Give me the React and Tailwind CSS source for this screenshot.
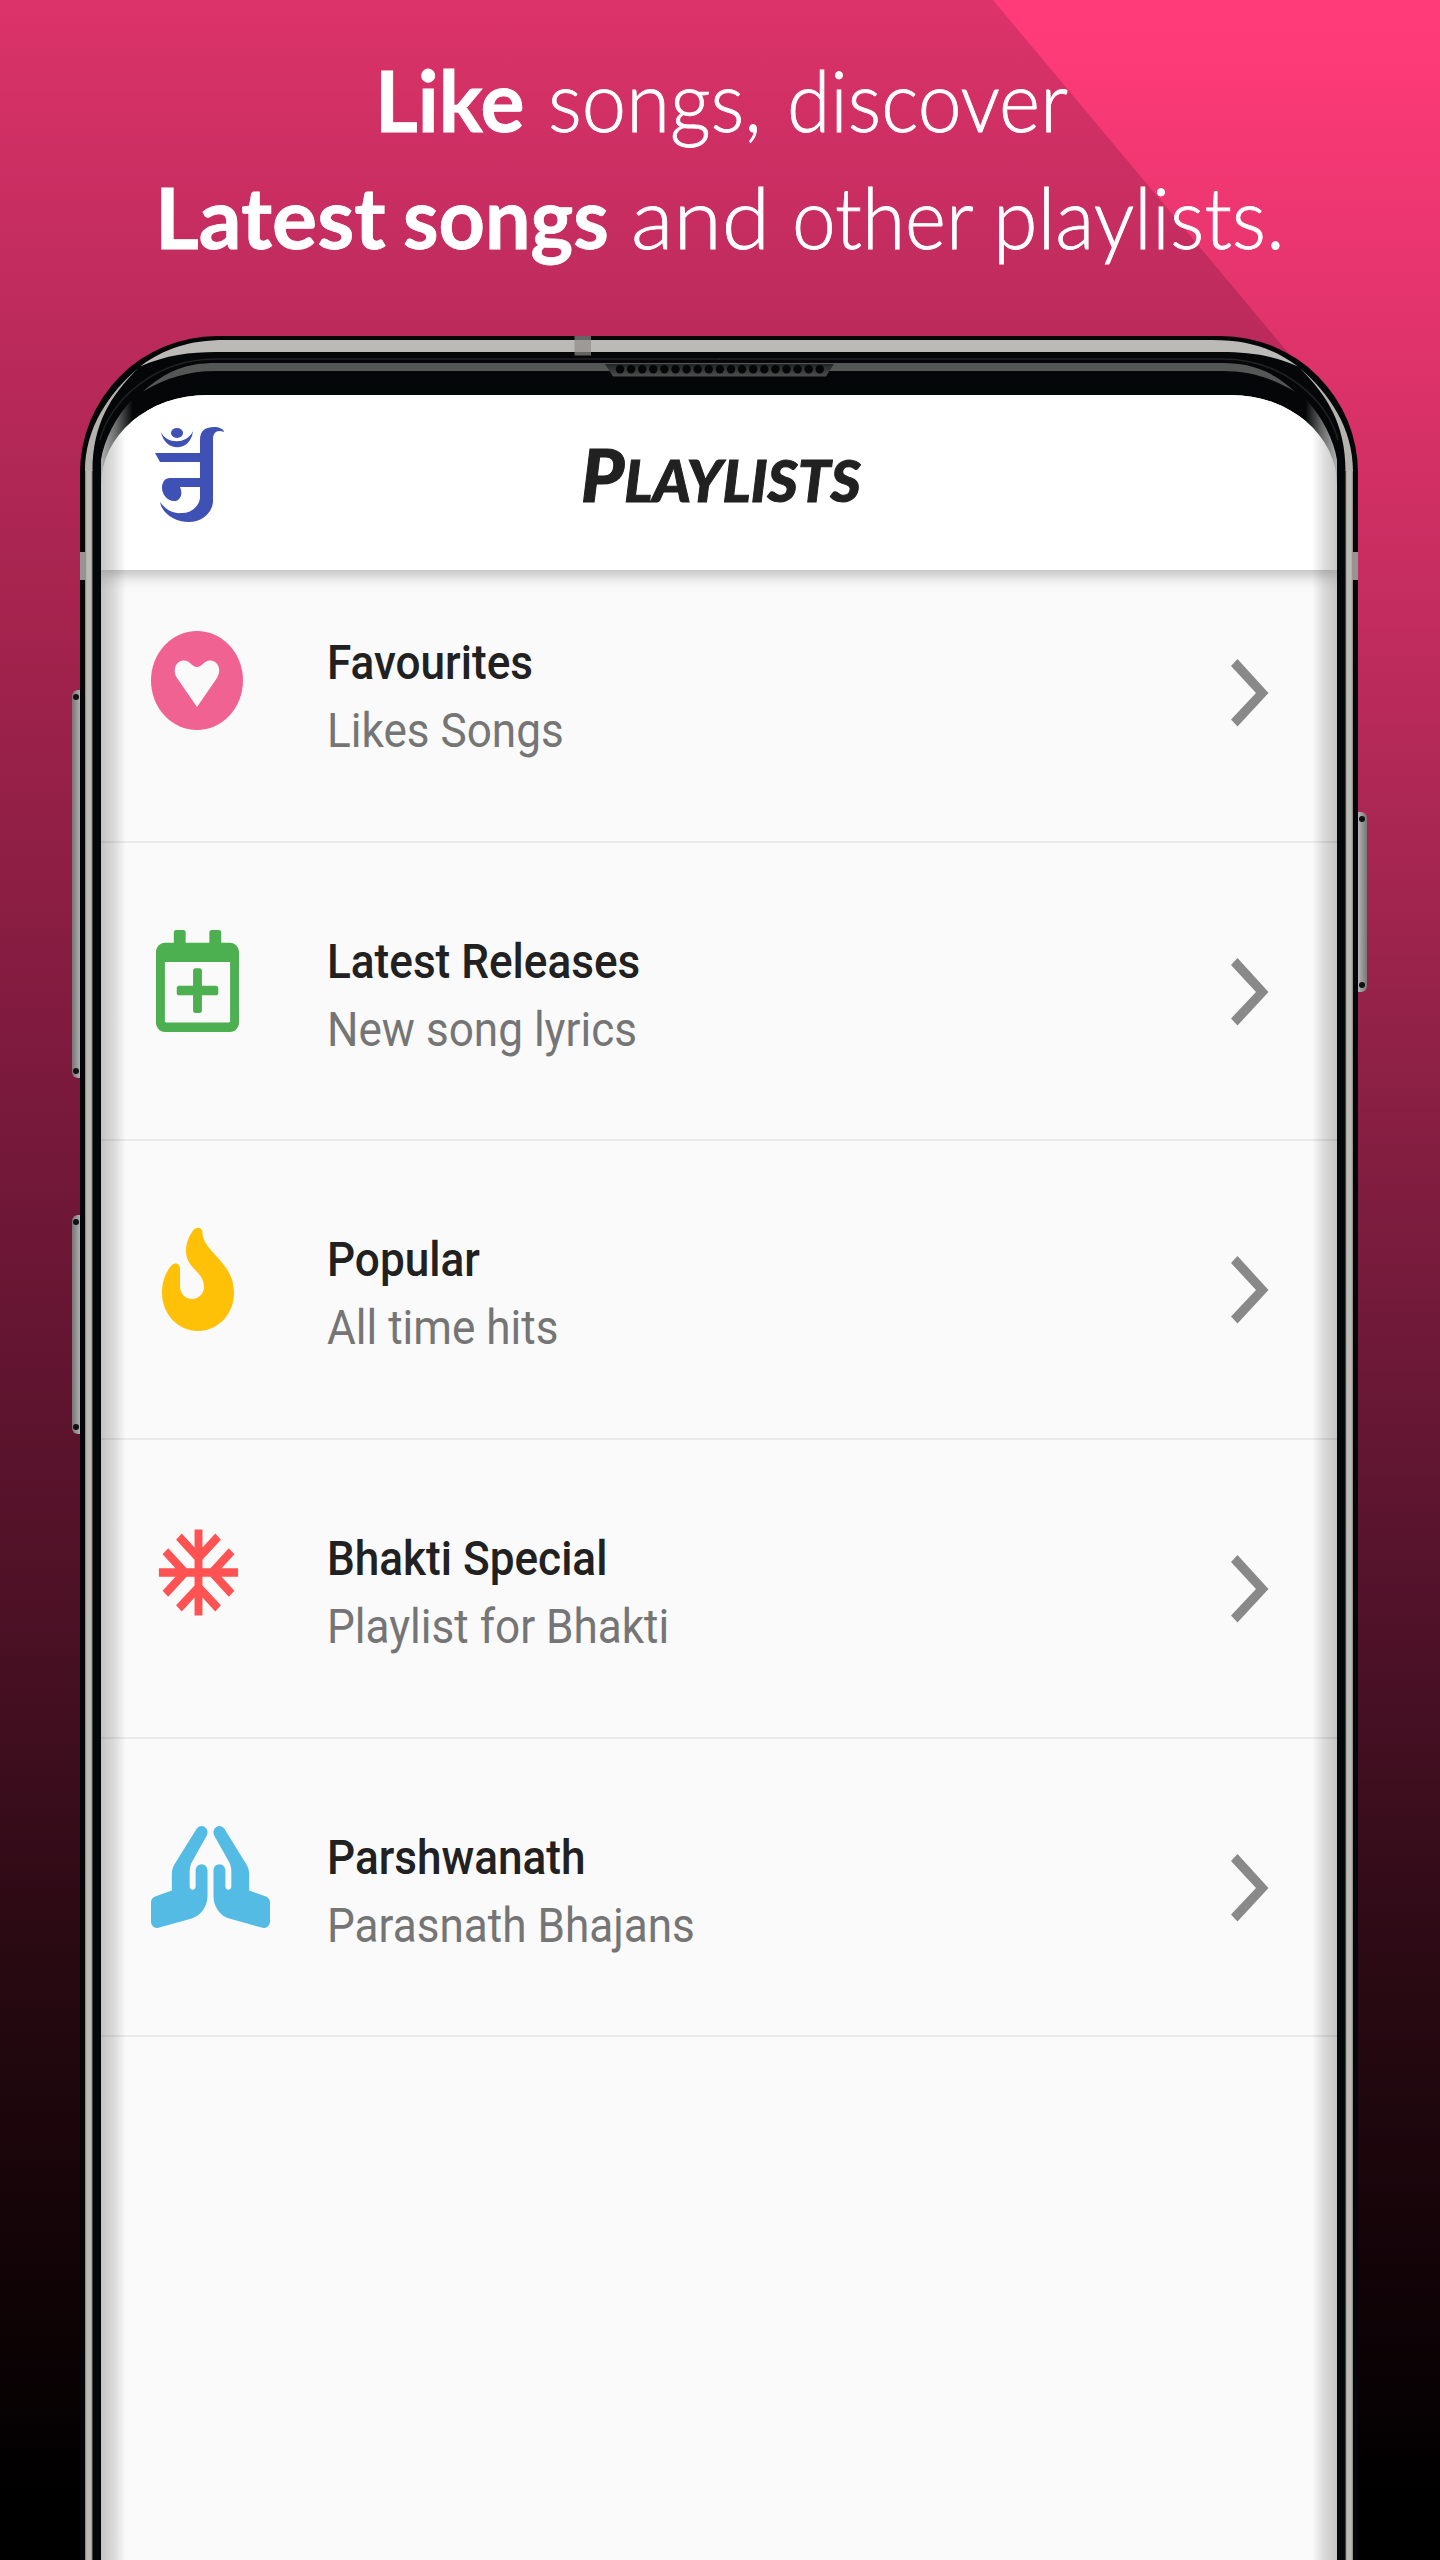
import React, { useLayoutEffect, useRef, useState } from "react";
import { FaPrayingHands, FaRegCalendarPlus } from "react-icons/fa";
import { MdAcUnit } from "react-icons/md";

// Stretches or squeezes its text so that it fills the given width.
function Fit({ width, className = "", children }) {
  const ref = useRef(null);
  const [scale, setScale] = useState(1);
  useLayoutEffect(() => {
    setScale(width / ref.current.offsetWidth);
  }, [width]);
  return (
    <span className="block shrink-0" style={{ width }}>
      <span
        ref={ref}
        className={"inline-block origin-left whitespace-nowrap " + className}
        style={{ transform: `scaleX(${scale})` }}
      >
        {children}
      </span>
    </span>
  );
}

function Headline() {
  return (
    <h1 className="relative flex h-[336px] flex-col pt-[41px] font-['Lato',sans-serif] text-[84px] leading-[117px] font-light text-white [-webkit-text-stroke:0.800px_white]">
      <span className="flex h-[117px] pl-[375px]">
        <Fit width={150} className="font-bold">Like</Fit>
        <span className="w-[23px]"> </span>
        <Fit width={214}>songs,</Fit>
        <span className="w-[25px]"> </span>
        <Fit width={281}>discover</Fit>
      </span>
      <span className="flex h-[117px] pl-[155px]">
        <Fit width={231} className="font-bold">Latest</Fit>
        <span className="w-[17px]"> </span>
        <Fit width={206} className="font-bold">songs</Fit>
        <span className="w-[22px]"> </span>
        <Fit width={139}>and</Fit>
        <span className="w-[22px]"> </span>
        <Fit width={182}>other</Fit>
        <span className="w-[19px]"> </span>
        <Fit width={292}>playlists.</Fit>
      </span>
    </h1>
  );
}

function LogoMark() {
  return (
    <svg className="h-[98px] w-[72px]" viewBox="0 0 72 98" fill="#3f51b5">
      <ellipse cx="23" cy="7" rx="6" ry="5" />
      <path d="M7 6 C12 18 33 19 39 5 C37 26 11 27 7 6Z" />
      <path d="M1 27 H46 V14 C46 4 52 1 60 1 C65 1 70 3 70 6 C63 3 59 7 59 13 V76 C58 87 48 96 35 96 C20 96 8 87 6 76 C12 84 19 88 28 87 C38 87 45 80 46 72 V61 H26 C29 67 27 75 20 75 C13 75 8 68 8 62 C8 56 11 52 16 52 H46 V36 H6Z" />
    </svg>
  );
}

function HeartIcon() {
  return (
    <svg className="h-[99px] w-[92px]" viewBox="0 0 92 99">
      <ellipse cx="46" cy="49.5" rx="46" ry="49.5" fill="#f06292" />
      <path d="M46 76 L26 47 C21 39 25 29.500 33 29.500 C39 29.500 41 36 46 36 C51 36 53 29.500 59 29.500 C67 29.500 71 39 66 47Z" fill="#fafafa" />
    </svg>
  );
}

function FlameIcon() {
  return (
    <svg className="h-[104px] w-[72px]" viewBox="0 0 72 104" fill="#ffc107">
      <path d="M31 3.500 C34 -0.500 40 0 40.500 5 C40 10 43 16 48 22 C57 33 72 44 72 66 C72 87 56 104 36 104 C16 104 0 87 0 66 C0 54 4 45 9 39 C12 34.500 18 36 18 42 V59 C18 66 23 72 30 72 C37 72 42 66 42 60 C42 44 24 42 24 24 C24 16 27 9 31 3.500Z" />
    </svg>
  );
}

function Chevron() {
  return (
    <svg className="h-[68px] w-[38px]" viewBox="0 0 38 68" fill="#898989">
      <path d="M6.500 0 L37.500 34 L6.500 67.500 L0 60.500 L25 34 L0 7Z" />
    </svg>
  );
}

const PLAYLISTS = [
  { title: "Favourites", note: "Likes Songs", icon: <HeartIcon /> },
  {
    title: "Latest Releases",
    note: "New song lyrics",
    icon: (
      <FaRegCalendarPlus preserveAspectRatio="none" className="ml-[5px] h-[102px] w-[83px] text-[#4caf50]" />
    ),
  },
  {
    title: "Popular",
    note: "All time hits",
    icon: <span className="-mt-[1px] ml-[11px] block"><FlameIcon /></span>,
  },
  {
    title: "Bhakti Special",
    note: "Playlist for Bhakti",
    icon: (
      <MdAcUnit preserveAspectRatio="none" className="-mt-[6px] h-[103px] w-[95px] text-[#ff5252]" />
    ),
  },
  {
    title: "Parshwanath",
    note: "Parasnath Bhajans",
    icon: (
      <FaPrayingHands preserveAspectRatio="none" className="h-[102px] w-[119px] text-[#54bce4]" />
    ),
  },
];

function Row({ title, note, icon }) {
  return (
    <li className="flex h-[298.700px] border-b-2 border-[#e9e9e9] font-['Roboto',sans-serif] text-[49px] leading-[67px]">
      <span className="w-[226px] shrink-0 pt-[87px] pl-[50px]">{icon}</span>
      <span className="flex-1 pt-[85px]">
        <span className="block origin-left scale-x-[0.9] font-medium text-[#212121]">{title}</span>
        <span className="block origin-left scale-x-[0.9] pt-[1px] text-[#757575]">{note}</span>
      </span>
      <span className="mt-[115px] mr-[68px] shrink-0"><Chevron /></span>
    </li>
  );
}

// Half of the bezel highlights; drawn once and mirrored.
function BezelSide() {
  return (
    <g>
      <rect x="5" y="134" width="7.500" height="2100" fill="url(#rail)" />
      <path d="M5 135 C5 92 29 57 58.500 32 C31 59 12.500 88 12.500 135Z" fill="#b5b3b0" />
      <path d="M60 30.500 C84 13 108 4 146 4 H640 V16 H136 C110 16 86 19 60 30.500Z" fill="#bcbab7" />
      <path d="M63 55.500 C86 35 106 27 136 27 H640 V35 H136 C108 35 86 42 63 55.500Z" fill="#555756" />
      <path d="M20 104 C30 65 74 23 136 23 H640" fill="none" stroke="#232122" strokeWidth="1.500" />
      <path d="M21 124 C24 104 36 80 52.500 63 V88 C38 102 27 124 22 148 H21Z" fill="url(#corner)" />
      <rect x="0" y="216" width="6" height="28" fill="#979593" />
    </g>
  );
}

function Bezel() {
  return (
    <svg className="pointer-events-none absolute inset-0 h-[2224px] w-[1278px]" viewBox="0 0 1278 2224">
      <defs>
        <linearGradient id="rail">
          <stop offset="0" stopColor="#858381" />
          <stop offset="0.250" stopColor="#bcbab7" />
          <stop offset="0.750" stopColor="#bcbab7" />
          <stop offset="1" stopColor="#858381" />
        </linearGradient>
        <linearGradient id="corner">
          <stop offset="0" stopColor="#b0b0b0" />
          <stop offset="0.500" stopColor="#666767" />
          <stop offset="1" stopColor="#050607" />
        </linearGradient>
        <linearGradient id="grille" x2="0" y2="1">
          <stop offset="0" stopColor="#222" />
          <stop offset="1" stopColor="#4d4e4e" />
        </linearGradient>
      </defs>
      <BezelSide />
      <g transform="translate(1278 0) scale(-1 1)"><BezelSide /></g>
      <rect x="494.500" y="0" width="16.500" height="19.500" fill="#8e8d8c" fillOpacity="0.700" />
      <path d="M525 28 H754 L746 40.500 H533Z" fill="url(#grille)" />
      {Array.from({ length: 19 }, (_, i) => (
        <circle key={i} cx={540 + i * 11.1} cy="33.300" r="4.200" fill="#050607" />
      ))}
    </svg>
  );
}

function SideButton({ className }) {
  return (
    <span className={"absolute flex w-[9px] flex-col items-center justify-between py-[4px] " + className}>
      <span className="size-[6px] rounded-full bg-[#111]" />
      <span className="size-[6px] rounded-full bg-[#111]" />
    </span>
  );
}

function Phone() {
  return (
    <div className="relative ml-[79.500px] h-[2224px] w-[1278px]">
      <SideButton className="top-[354px] -left-[8px] h-[388px] rounded-l-[6px] bg-linear-to-r from-[#777] to-[#b5b5b5]" />
      <SideButton className="top-[879px] -left-[8px] h-[219px] rounded-l-[6px] bg-linear-to-r from-[#777] to-[#b5b5b5]" />
      <SideButton className="top-[476px] -right-[9px] h-[180px] rounded-r-[6px] bg-linear-to-l from-[#777] to-[#b5b5b5]" />
      <div className="relative h-full overflow-hidden rounded-t-[137px] bg-[#050607] px-[21px] pt-[59px]">
        <div className="relative h-full overflow-hidden rounded-t-[106px_90px] bg-[#fafafa]">
          <header className="relative z-10 flex h-[175px] bg-white shadow-[0_3px_16px_rgba(0,0,0,0.320)]">
            <span className="pt-[31px] pl-[53px]"><LogoMark /></span>
            <h2 className="pt-[39px] pl-[355px] font-['Lato',sans-serif] text-[57px] leading-[80px] font-black text-[#212121] uppercase italic [-webkit-text-stroke:1px_#212121]">
              <Fit width={280} className="first-letter:text-[72px]">Playlists</Fit>
            </h2>
          </header>
          <ul className="-mt-[26px]">
            {PLAYLISTS.map((p) => (
              <Row key={p.title} {...p} />
            ))}
          </ul>
          <span className="absolute inset-y-0 left-0 z-20 w-[25px] bg-linear-to-r from-black/22 via-black/13 to-transparent" />
          <span className="absolute inset-y-0 right-0 z-20 w-[25px] bg-linear-to-l from-black/22 via-black/13 to-transparent" />
        </div>
        <Bezel />
      </div>
    </div>
  );
}

export default function App() {
  return (
    <main className="relative h-[2560px] w-[1440px] overflow-hidden bg-[linear-gradient(180deg,#dc336a_0px,#bb2a5b_340px,#a6244f_600px,#79193b_1100px,#4a1024_1640px,#280912_1960px,#100306_2286px,#000_2500px)]">
      <div className="absolute inset-0 bg-[linear-gradient(180deg,#ff3b79_0px,#ff3b79_30px,#e0336b_340px,#c22c5e_620px,#8c2045_1080px,#52122a_1600px,#2b0a14_1960px,#110307_2286px,#000_2500px)] [clip-path:polygon(993px_0,1440px_0,1440px_2560px,1300px_2560px,1300px_367px)]" />
      <Headline />
      <Phone />
    </main>
  );
}
